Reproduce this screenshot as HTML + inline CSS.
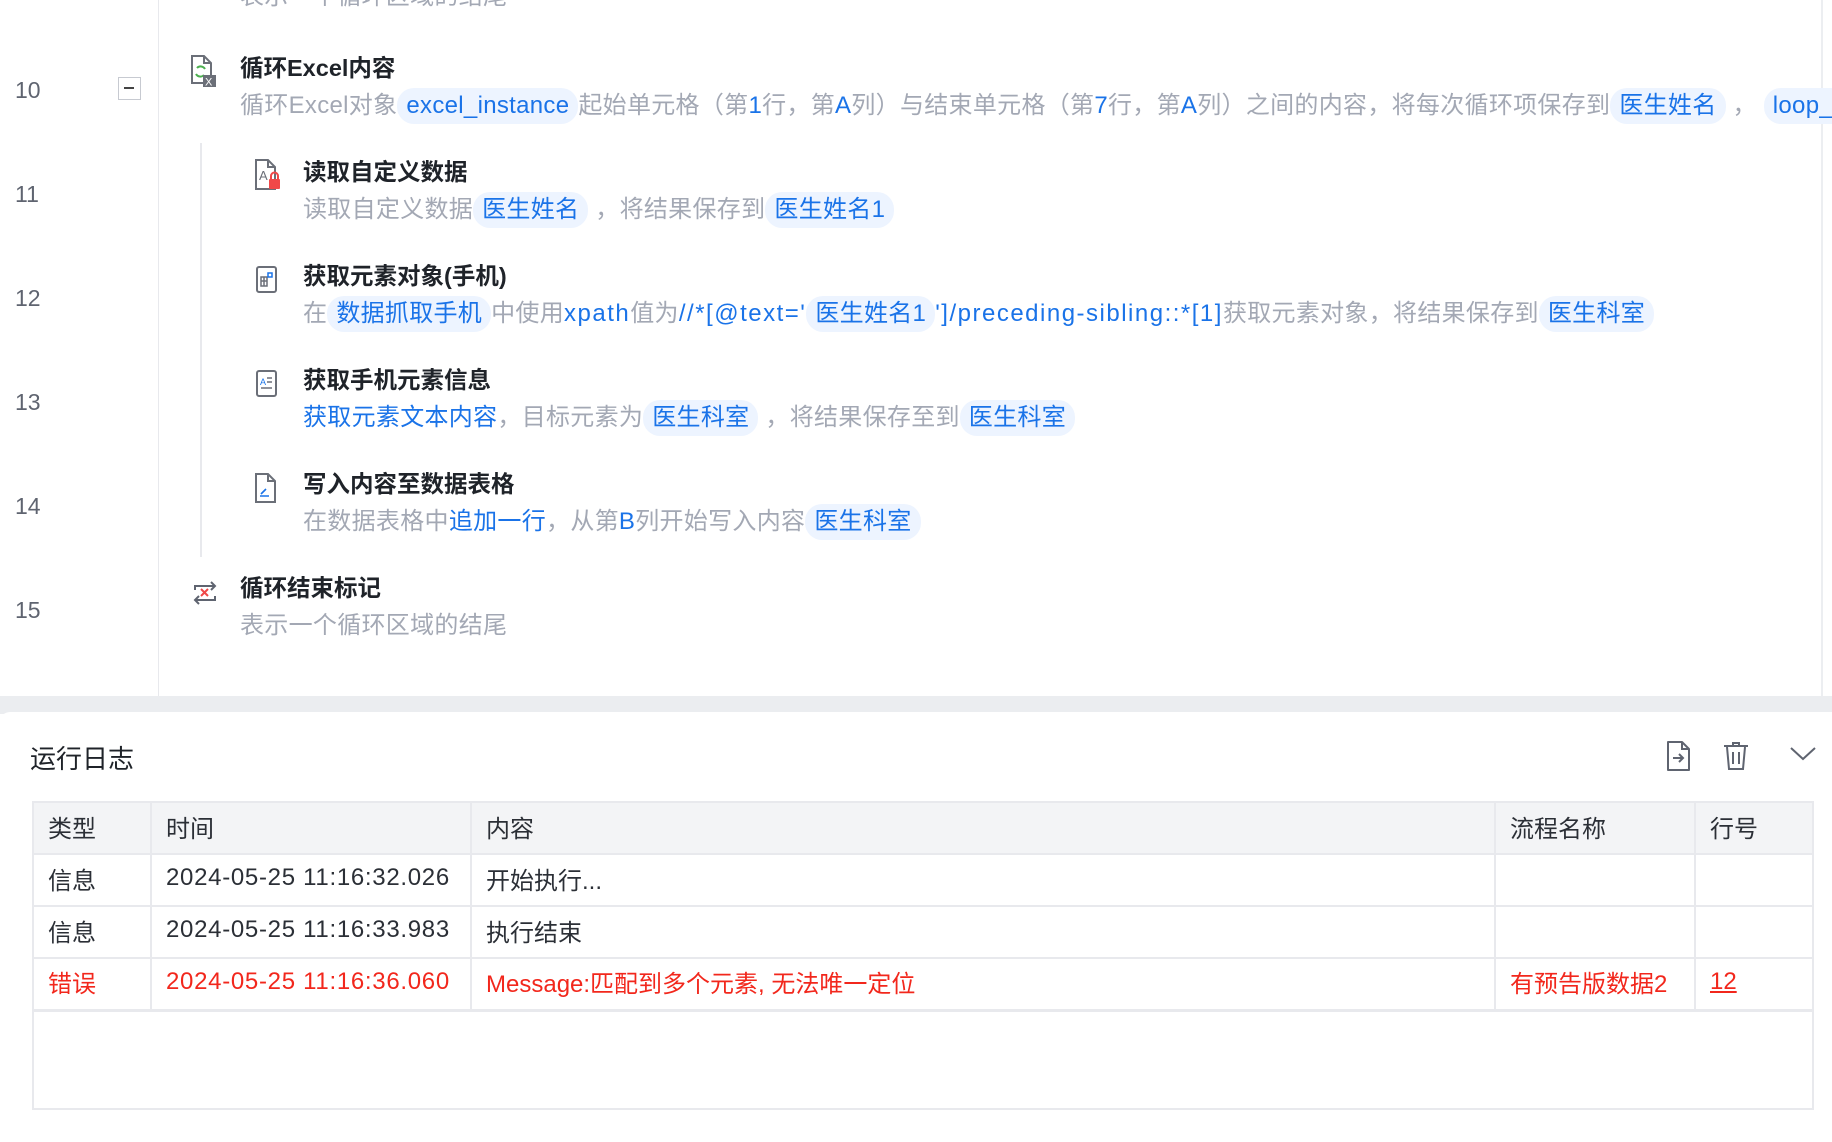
<!DOCTYPE html>
<html><head><meta charset="utf-8">
<style>
*{margin:0;padding:0;box-sizing:border-box}
body{width:1832px;height:1138px;background:#fff;position:relative;overflow:hidden;font-family:"Liberation Sans","Noto Sans CJK SC",sans-serif;color:#222}
.abs{position:absolute;white-space:nowrap}
.ln{position:absolute;left:15px;font-size:23px;color:#5f6470;line-height:30px}
.t{position:absolute;font-size:23.5px;font-weight:bold;color:#1f2329;line-height:30px;white-space:nowrap}
.d{position:absolute;font-size:24px;letter-spacing:0.3px;color:#a3a8b4;line-height:36px;white-space:nowrap}
.b{color:#1a73e8}
.w{letter-spacing:1.5px}
.c{display:inline-block;background:#edf4ff;color:#1a73e8;border-radius:17px;padding:0 9px;line-height:36px;height:36px}
.ic{position:absolute}
table{position:absolute;left:32px;top:801px;width:1782px;border-collapse:collapse;font-size:24px;color:#2b2f36}
td,th{border:2px solid #e8e9ed;text-align:left;font-weight:normal;padding:0 0 4px 14px;height:52px}
th{background:#f3f4f6}
td:nth-child(2){letter-spacing:0.7px}
.r td{color:#f2271c}
</style></head><body>
<div class="abs" style="left:158px;top:0;width:1px;height:696px;background:#e8e9ed"></div>
<div class="abs" style="left:1821px;top:0;width:2px;height:696px;background:#eceef1"></div>

<div class="d" style="left:240px;top:-21px">表示一个循环区域的结尾</div>

<div class="ln" style="top:75px">10</div>
<div class="abs" style="left:118px;top:77px;width:23px;height:23px;border:1.5px solid #c7cad1;"><div style="position:absolute;left:5px;top:9px;width:10px;height:2px;background:#444"></div></div>
<svg class="ic" style="left:189px;top:54px" width="30" height="34" viewBox="0 0 30 34"><path d="M3 2h12l7 7v20H3z" fill="#fff" stroke="#6b6f78" stroke-width="2"/><path d="M15 2v7h7" fill="none" stroke="#6b6f78" stroke-width="2"/><path d="M8 14a5 5 0 0 1 8 1M15 21a5 5 0 0 1-8-1" fill="none" stroke="#4caf50" stroke-width="2"/><rect x="14" y="21" width="13" height="12" fill="#6b6f78"/><text x="16" y="31.5" font-size="11" fill="#fff" font-family="Liberation Sans">X</text></svg>
<div class="t" style="left:240px;top:53px">循环Excel内容</div>
<div class="d" style="left:240px;top:88px">循环Excel对象<span class="c">excel_instance</span>起始单元格（第<span class="b">1</span>行，第<span class="b">A</span>列）与结束单元格（第<span class="b">7</span>行，第<span class="b">A</span>列）之间的内容，将每次循环项保存到<span class="c">医生姓名</span> ，&nbsp;<span class="c">loop_item</span></div>

<div class="abs" style="left:200px;top:143px;width:2px;height:414px;background:#e8e9ed"></div>

<div class="ln" style="top:179px">11</div>
<svg class="ic" style="left:253px;top:158px" width="32" height="34" viewBox="0 0 32 34"><path d="M3 2h12l7 7v22H3z" fill="#fff" stroke="#6b6f78" stroke-width="2"/><path d="M15 2v7h7" fill="none" stroke="#6b6f78" stroke-width="2"/><text x="6" y="22" font-size="13" fill="#6b6f78" font-family="Liberation Sans">A</text><rect x="16" y="21" width="11" height="10" rx="1" fill="#f04848"/><path d="M18 21v-3a3.5 3.5 0 0 1 7 0v3" fill="none" stroke="#f04848" stroke-width="2"/></svg>
<div class="t" style="left:303px;top:157px">读取自定义数据</div>
<div class="d" style="left:303px;top:192px">读取自定义数据<span class="c">医生姓名</span> ，将结果保存到<span class="c">医生姓名1</span></div>

<div class="ln" style="top:283px">12</div>
<svg class="ic" style="left:254px;top:265px" width="28" height="30" viewBox="0 0 28 30"><rect x="3" y="2" width="19" height="25" rx="2" fill="#fff" stroke="#6b6f78" stroke-width="2"/><path d="M7 12h6v9H7zM7 16h6M10 12v9" fill="none" stroke="#6b6f78" stroke-width="1.5"/><rect x="14" y="8" width="4" height="4" fill="none" stroke="#1a73e8" stroke-width="1.5"/></svg>
<div class="t" style="left:303px;top:261px">获取元素对象(手机)</div>
<div class="d" style="left:303px;top:296px">在<span class="c">数据抓取手机</span>中使用<span class="b w">xpath</span>值为<span class="b w">//*[@text='</span><span class="c">医生姓名1</span><span class="b w">']/preceding-sibling::*[1]</span>获取元素对象，将结果保存到<span class="c">医生科室</span></div>

<div class="ln" style="top:387px">13</div>
<svg class="ic" style="left:254px;top:369px" width="28" height="30" viewBox="0 0 28 30"><rect x="3" y="2" width="19" height="25" rx="2" fill="#fff" stroke="#6b6f78" stroke-width="2"/><text x="6" y="16" font-size="9" fill="#1a73e8" font-family="Liberation Sans">A</text><path d="M13 9h5M13 13h5M7 19h11" stroke="#6b6f78" stroke-width="1.5"/></svg>
<div class="t" style="left:303px;top:365px">获取手机元素信息</div>
<div class="d" style="left:303px;top:400px"><span class="b">获取元素文本内容</span>，目标元素为<span class="c">医生科室</span> ，将结果保存至到<span class="c">医生科室</span></div>

<div class="ln" style="top:491px">14</div>
<svg class="ic" style="left:253px;top:472px" width="30" height="32" viewBox="0 0 30 32"><path d="M3 2h12l7 7v21H3z" fill="#fff" stroke="#6b6f78" stroke-width="2"/><path d="M15 2v7h7" fill="none" stroke="#6b6f78" stroke-width="2"/><path d="M8 22l5-5M7 24h9" stroke="#1a73e8" stroke-width="1.6"/></svg>
<div class="t" style="left:303px;top:469px">写入内容至数据表格</div>
<div class="d" style="left:303px;top:504px">在数据表格中<span class="b">追加一行</span>，从第<span class="b">B</span>列开始写入内容<span class="c">医生科室</span></div>

<div class="ln" style="top:595px">15</div>
<svg class="ic" style="left:189px;top:578px" width="32" height="30" viewBox="0 0 32 30"><path d="M6 12V8h20M22 4l4 4-4 4M26 18v4H6M10 26l-4-4 4-4" fill="none" stroke="#5f6470" stroke-width="2"/><path d="M12 11l7 7M19 11l-7 7" stroke="#f04848" stroke-width="2"/></svg>
<div class="t" style="left:240px;top:573px">循环结束标记</div>
<div class="d" style="left:240px;top:608px">表示一个循环区域的结尾</div>

<div class="abs" style="left:0;top:696px;width:1832px;height:18px;background:#ebedf0"></div>
<div class="abs" style="left:0;top:712px;width:1832px;height:430px;background:#fff;border-top-left-radius:10px"></div>

<div class="abs" style="left:30px;top:739px;font-size:26px;color:#1f2329">运行日志</div>
<svg class="ic" style="left:1664px;top:740px" width="30" height="32" viewBox="0 0 30 32"><path d="M4 2h14l7 7v21H4z" fill="none" stroke="#5f6470" stroke-width="2" stroke-linejoin="round"/><path d="M18 2v7h7" fill="none" stroke="#5f6470" stroke-width="2"/><path d="M9 18h10M15 14l4 4-4 4" fill="none" stroke="#5f6470" stroke-width="2"/></svg>
<svg class="ic" style="left:1721px;top:740px" width="30" height="32" viewBox="0 0 30 32"><path d="M3 6h24M12 6V3h6v3M6 7l2 22h14l2-22M12 12v12M18 12v12" fill="none" stroke="#5f6470" stroke-width="2"/></svg>
<svg class="ic" style="left:1788px;top:744px" width="30" height="20" viewBox="0 0 30 20"><path d="M3 4l12 11L27 4" fill="none" stroke="#5f6470" stroke-width="2"/></svg>

<table>
<tr><th style="width:118px">类型</th><th style="width:320px">时间</th><th style="width:1024px">内容</th><th style="width:200px">流程名称</th><th>行号</th></tr>
<tr><td>信息</td><td>2024-05-25 11:16:32.026</td><td>开始执行...</td><td></td><td></td></tr>
<tr><td>信息</td><td>2024-05-25 11:16:33.983</td><td>执行结束</td><td></td><td></td></tr>
<tr class="r"><td>错误</td><td>2024-05-25 11:16:36.060</td><td>Message:匹配到多个元素, 无法唯一定位</td><td>有预告版数据2</td><td><u>12</u></td></tr>
<tr><td colspan="5" style="height:99px;border-top:3px solid #e8e9ed"></td></tr>
</table>
</body></html>
